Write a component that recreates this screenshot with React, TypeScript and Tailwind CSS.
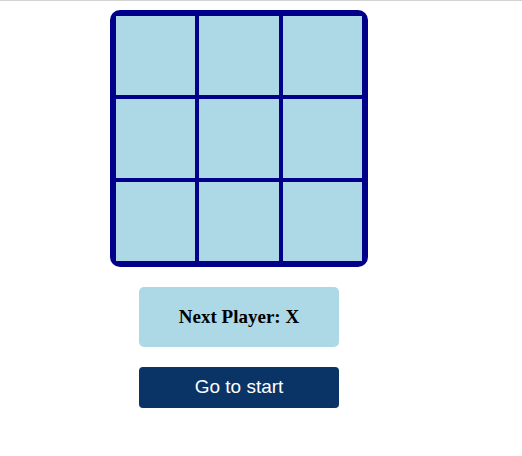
import React, { useState } from 'react';

const App: React.FC = () => {
  const [squares, setSquares] = useState<(string | null)[]>(Array(9).fill(null));
  const [xNext, setXNext] = useState(true);

  const handleClick = (i: number) => {
    if (squares[i]) return;
    const next = squares.slice();
    next[i] = xNext ? 'X' : 'O';
    setSquares(next);
    setXNext(!xNext);
  };

  return (
    <div className="min-h-[456px] w-full border-t border-[#d3d3d3] bg-white">
      <div className="ml-[110px] flex w-[258px] flex-col items-center pt-[9px]">
        {/* Board */}
        <div className="rounded-[10px] border-4 border-[#00008b] bg-[#00008b]">
          <div className="grid h-[249px] w-[250px] grid-cols-3 grid-rows-3">
            {squares.map((sq, i) => (
              <button
                key={i}
                onClick={() => handleClick(i)}
                className="border-2 border-[#00008b] bg-[#add8e6] text-4xl font-bold text-[#00008b]"
              >
                {sq}
              </button>
            ))}
          </div>
        </div>

        {/* Status */}
        <div className="mt-5 flex h-[60px] w-[200px] items-center justify-center rounded-[5px] bg-[#add8e6]">
          <span className="text-[19px] font-bold text-black [font-family:'Liberation_Serif',serif]">
            Next Player: {xNext ? 'X' : 'O'}
          </span>
        </div>

        {/* Reset */}
        <button
          onClick={() => {
            setSquares(Array(9).fill(null));
            setXNext(true);
          }}
          className="mt-5 h-[41px] w-[200px] rounded-[4px] bg-[#0a3366] text-[19px] text-white [font-family:'Liberation_Sans',Arial,sans-serif]"
        >
          Go to start
        </button>
      </div>
    </div>
  );
};

export default App;
